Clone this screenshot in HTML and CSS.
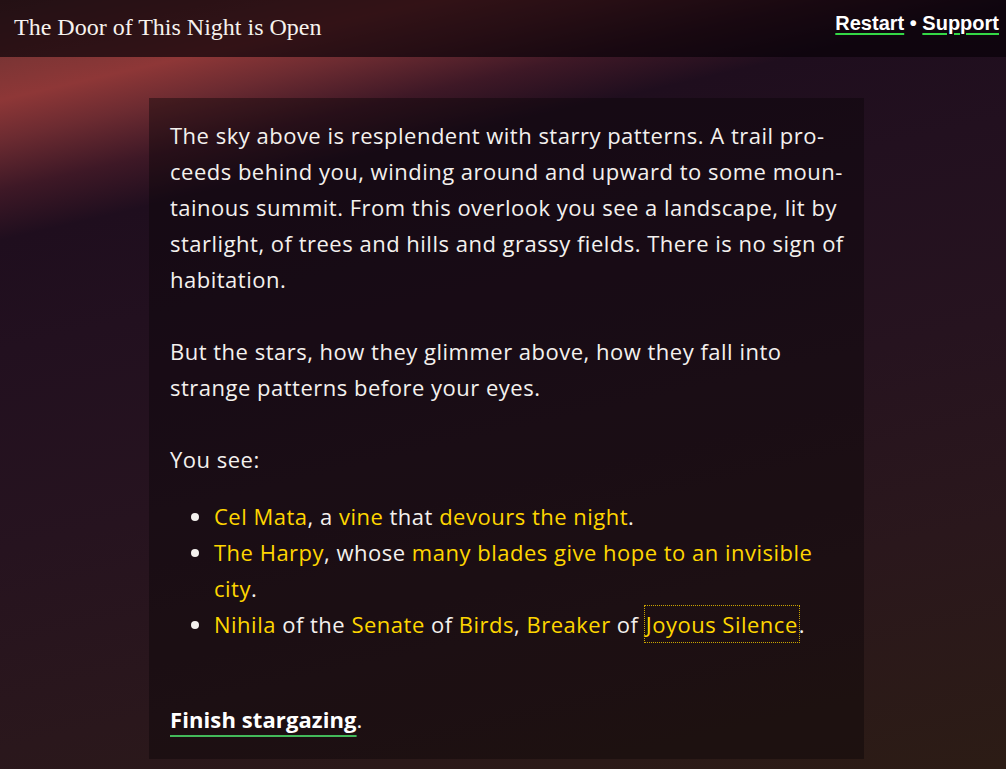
FILE: index.html
```html
<!DOCTYPE html>
<html lang="en">
<head>
<meta charset="utf-8">
<title>The Door of This Night is Open</title>
<link rel="stylesheet" href="styles.css">
</head>
<body>
<header class="topbar">
  <h1 class="title">The Door of This Night is Open</h1>
  <nav class="menu">
    <a class="menu-link" href="#">Restart</a><span class="sep"> • </span><a class="menu-link" href="#">Support</a>
  </nav>
</header>
<main class="stage">
  <section class="panel">
    <p>The sky above is resplendent with starry patterns. A trail pro-<br>ceeds behind you, winding around and upward to some moun-<br>tainous summit. From this overlook you see a landscape, lit by<br>starlight, of trees and hills and grassy fields. There is no sign of<br>habitation.</p>
    <p>But the stars, how they glimmer above, how they fall into<br>strange patterns before your eyes.</p>
    <p>You see:</p>
    <ul class="sights">
      <li><a class="star" href="#">Cel Mata</a>, a <a class="star" href="#">vine</a> that <a class="star" href="#">devours the night</a>.</li>
      <li><a class="star" href="#">The Harpy</a>, whose <a class="star" href="#">many blades give hope to an invisible<br>city</a>.</li>
      <li><a class="star" href="#">Nihila</a> of the <a class="star" href="#">Senate</a> of <a class="star" href="#">Birds</a>, <a class="star" href="#">Breaker</a> of <a class="star focused" href="#">Joyous Silence</a>.</li>
    </ul>
    <p class="finish"><a class="choice" href="#">Finish stargazing</a>.</p>
  </section>
</main>
</body>
</html>
```

FILE: styles.css
```css
html, body {
  margin: 0;
  padding: 0;
}

body {
  min-height: 100vh;
  background: linear-gradient(167deg,
    #603131 0%,
    #8e3737 10%,
    #6c2b31 14%,
    #3e1826 19%,
    #1f0e1e 24%,
    #22101f 35%,
    #26131f 55%,
    #2a171c 75%,
    #2c1c15 100%);
  color: #f4f1ee;
  font-family: "Open Sans", Lato, sans-serif;
  overflow: hidden;
}

.topbar {
  height: 57px;
  box-sizing: border-box;
  display: flex;
  justify-content: space-between;
  align-items: flex-start;
  padding: 0 7px 0 14px;
  background: rgba(8, 2, 8, 0.68);
}

.title {
  margin: 0;
  padding-top: 15px;
  font-family: "Liberation Serif", "Times New Roman", serif;
  font-weight: normal;
  font-size: 24px;
  line-height: 24px;
  color: #f6f2ee;
}

.menu {
  padding-top: 13px;
  font-family: "Liberation Sans", Arial, sans-serif;
  font-weight: bold;
  font-size: 20px;
  line-height: 20px;
  color: #ffffff;
}

.menu-link {
  color: #ffffff;
  text-decoration: underline;
  text-decoration-color: #34d846;
  text-decoration-thickness: 2px;
  text-underline-offset: 3px;
}

.stage {
  display: flex;
  justify-content: center;
  padding-left: 7px;
  padding-top: 41px;
}

.panel {
  width: 715px;
  box-sizing: border-box;
  padding: 19px 21px 22px;
  background: rgba(10, 4, 8, 0.42);
  font-size: 22px;
  letter-spacing: 0.5px;
  line-height: 36px;
}

.panel p {
  margin: 0 0 36px;
  white-space: nowrap;
}

.panel p:nth-of-type(3) {
  margin-bottom: 21px;
}

.sights {
  margin: 0;
  padding-left: 44px;
  white-space: nowrap;
}

.star {
  color: #ffd600;
  text-decoration: none;
}

.focused {
  outline: 1px dotted #c9a400;
  padding: 3px 1px;
}

.panel .finish {
  margin: 59px 0 0;
}

.choice {
  color: #ffffff;
  font-weight: bold;
  letter-spacing: 0.1px;
  text-decoration: underline;
  text-decoration-color: #43b95a;
  text-decoration-thickness: 2px;
  text-underline-offset: 7px;
}
```
